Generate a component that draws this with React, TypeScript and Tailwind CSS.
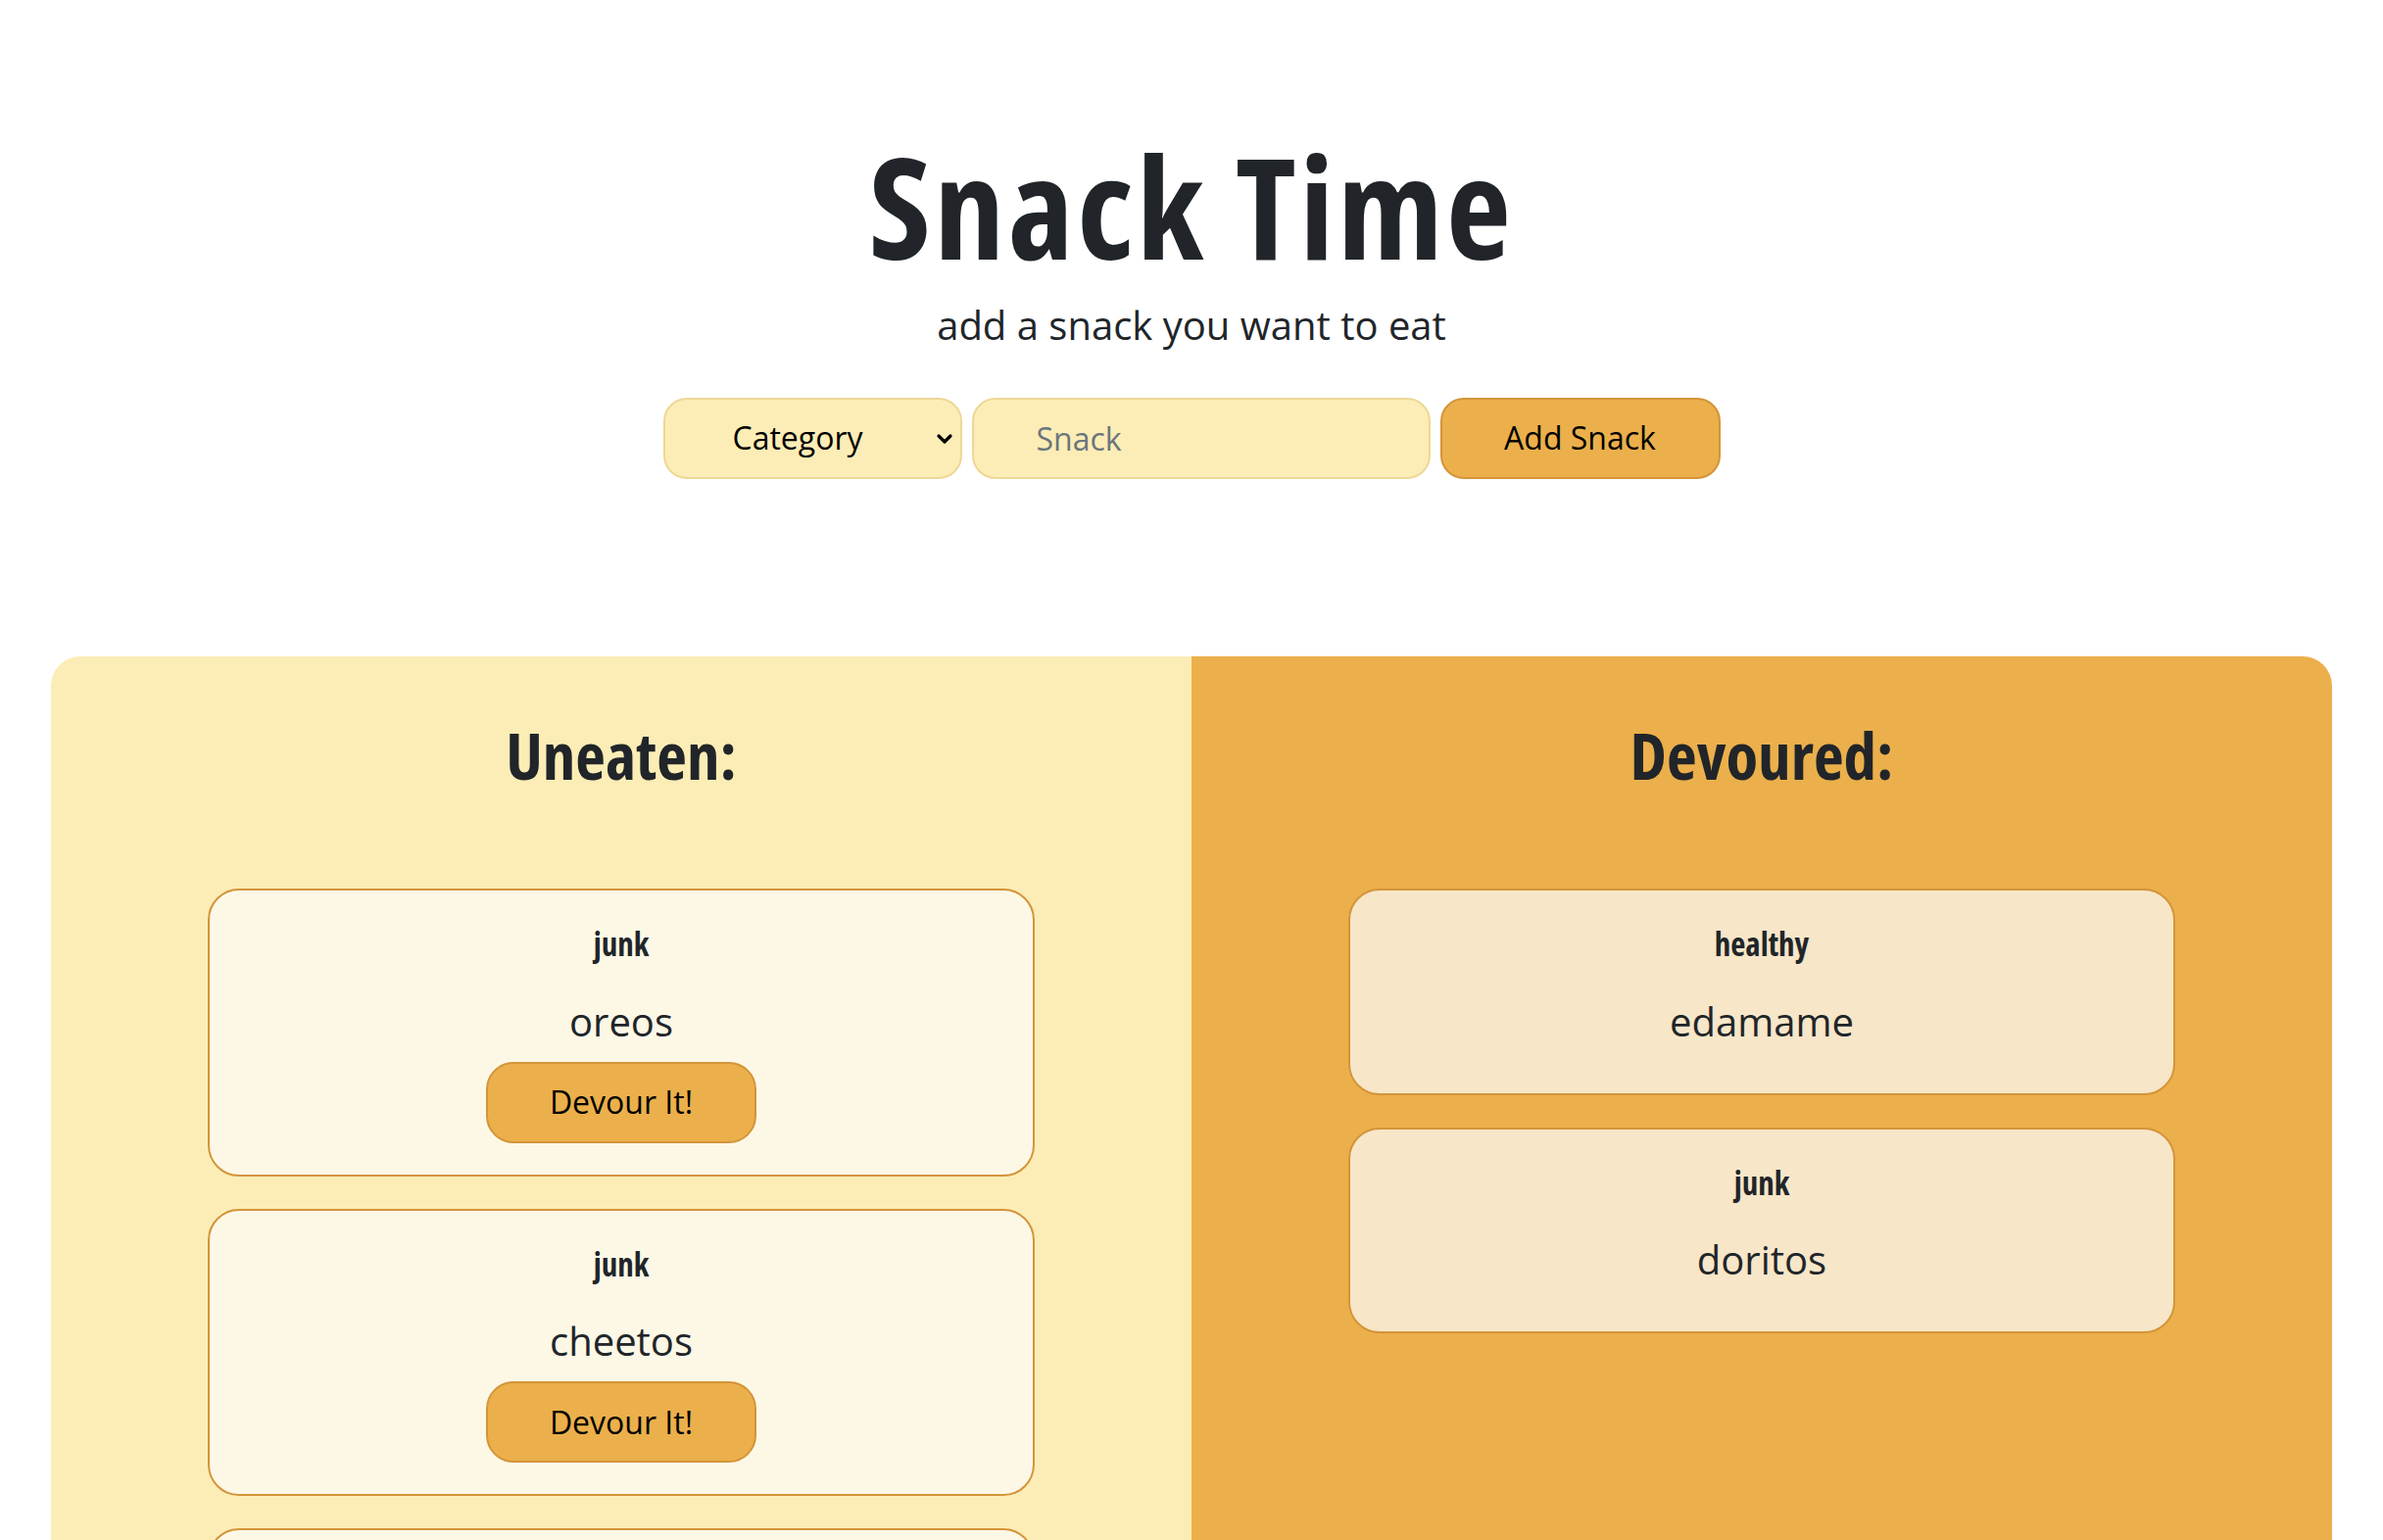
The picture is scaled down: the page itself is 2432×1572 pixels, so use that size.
import React from "react";

interface Snack {
  category: string;
  name: string;
}

const uneaten: Snack[] = [
  { category: "junk", name: "oreos" },
  { category: "junk", name: "cheetos" },
  { category: "healthy", name: "apples" },
];

const devoured: Snack[] = [
  { category: "healthy", name: "edamame" },
  { category: "junk", name: "doritos" },
];

// condensed bold display face for headings
const headFont = "font-['Open_Sans',sans-serif] font-bold [font-stretch:75%]";

const SnackCard: React.FC<{ snack: Snack; eaten?: boolean }> = ({ snack, eaten }) => {
  return (
    <div
      className={
        "w-[844px] rounded-[32px] border-2 border-[#d4943a] px-8 pt-[35px] pb-[32px] text-center " +
        (eaten ? "bg-[#f7e6c8]" : "bg-[#fdf8e6]")
      }
    >
      <h6 className={headFont + " text-[33px] leading-[1.2] mb-[29px]"}>{snack.category}</h6>
      <p className="text-[40px] leading-[1.5] mb-[11px]">{snack.name}</p>
      {!eaten && (
        <button className="w-[276px] h-[83px] rounded-[28px] border-2 border-[#d4943a] bg-[#ebb04b] text-[32px] text-black">
          Devour It!
        </button>
      )}
    </div>
  );
};

const App: React.FC = () => {
  return (
    <div className="min-h-screen bg-white text-[#212529] font-['Open_Sans',sans-serif]">
      <header className="pt-[123px] text-center">
        <h1 className={headFont + " text-[144px] leading-[1.2] tracking-[3.5px]"}>Snack Time</h1>
        <p className="mt-[6px] text-[40px] leading-[1.5]">add a snack you want to eat</p>
        <form className="mt-[44px] flex justify-center gap-[10px]" onSubmit={(e) => e.preventDefault()}>
          <div className="relative">
            <select
              defaultValue=""
              className="appearance-none w-[305px] h-[83px] rounded-[24px] border-2 border-[#eed795] bg-[#fcedb6] pr-[30px] text-center text-[32px] text-black outline-none"
            >
              <option value="" disabled>
                Category
              </option>
              <option value="junk">junk</option>
              <option value="healthy">healthy</option>
            </select>
            <svg
              className="pointer-events-none absolute right-[9px] top-[36px]"
              width="18"
              height="12"
              viewBox="0 0 18 12"
              fill="none"
              stroke="#000"
              strokeWidth="3.2"
              strokeLinecap="round"
              strokeLinejoin="round"
            >
              <path d="M3 3l6 6 6-6" />
            </svg>
          </div>
          <input
            placeholder="Snack"
            className="w-[468px] h-[83px] rounded-[24px] border-2 border-[#eed795] bg-[#fcedb6] pl-[64px] text-[32px] text-black placeholder:text-[#6c757d] outline-none"
          />
          <button className="w-[286px] h-[83px] rounded-[24px] border-2 border-[#d4943a] bg-[#ebb04b] text-[32px] text-black">
            Add Snack
          </button>
        </form>
      </header>

      <main className="mx-[52px] mt-[181px] grid grid-cols-2">
        <section className="rounded-tl-[30px] bg-[#fcedb6] pt-[60px] pb-16 flex flex-col items-center">
          <h2 className={headFont + " text-[67px] leading-[1.2] mb-[97px]"}>Uneaten:</h2>
          <div className="flex flex-col gap-[33px]">
            {uneaten.map((s, i) => (
              <SnackCard key={i} snack={s} />
            ))}
          </div>
        </section>
        <section className="rounded-tr-[30px] bg-[#ebb04b] pt-[60px] pb-16 flex flex-col items-center">
          <h2 className={headFont + " text-[67px] leading-[1.2] mb-[97px]"}>Devoured:</h2>
          <div className="flex flex-col gap-[33px]">
            {devoured.map((s, i) => (
              <SnackCard key={i} snack={s} eaten />
            ))}
          </div>
        </section>
      </main>
    </div>
  );
};

export default App;
